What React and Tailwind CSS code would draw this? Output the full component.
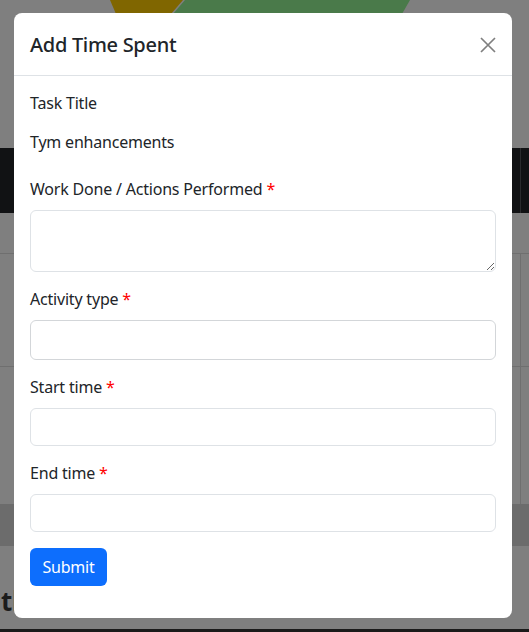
import React from "react";

const Field = ({ label, className = "mt-[15px]", children }) => (
  <div className={className}>
    <label className="block h-6 leading-6">
      {label} <span className="text-[#f00]">*</span>
    </label>
    <div className="mt-[9px]">{children}</div>
  </div>
);

const Backdrop = () => {
  return (
    <div className="flex flex-col h-[632px]">
      {/* logo strip */}
      <div className="h-[148px] shrink-0">
        <svg width="529" height="148" viewBox="0 0 529 148">
          <polygon points="110,0 183,0 171,14 116,14" fill="#806600" />
          <polygon points="185,0 410,0 402,14 173,14" fill="#4a7a4a" />
        </svg>
      </div>

      {/* navbar */}
      <div className="h-[65px] shrink-0 bg-[#111214] flex">
        <div className="w-[521px] border-r border-[#2a2b2d]" />
      </div>

      <div className="h-[41px] shrink-0 border-b border-[#6f6f6f]" />

      {/* table rows */}
      <div className="h-[113px] shrink-0 flex border-b border-[#6f6f6f]">
        <div className="w-[521px] border-r border-[#6f6f6f]" />
      </div>
      <div className="h-[137px] shrink-0 flex">
        <div className="w-[521px] border-r border-[#6f6f6f]" />
      </div>
      <div className="h-[42px] shrink-0 bg-[#6c6c6c]" />

      <div className="flex-1 flex items-center pl-[1px] pt-[26px]">
        <span className="text-[26px] font-bold text-[#1c1c1c] leading-none">th</span>
      </div>
      <div className="h-[3px] shrink-0 bg-[#1a1a1a]" />
    </div>
  );
};

export default function App() {
  return (
    <div className="relative w-[529px] h-[632px] overflow-hidden bg-[#7f7f7f] font-['Noto_Sans',sans-serif] text-[16px] text-[#212529]">
      <Backdrop />

      {/* modal */}
      <div className="absolute left-[14px] top-[13px] w-[498px] h-[605px] pt-[1px] bg-white rounded-lg flex flex-col tracking-[-0.2px]">
        <div className="h-[62px] shrink-0 flex items-center justify-between px-4 border-b border-[#dee2e6]">
          <h5 className="text-[20px] font-medium leading-[30px] tracking-[-0.3px]">Add Time Spent</h5>
          <button className="w-4 h-4 flex items-center justify-center">
            <svg width="16" height="16" viewBox="0 0 16 16">
              <path d="M1 1L15 15M15 1L1 15" stroke="#7f7f7f" strokeWidth="1.7" />
            </svg>
          </button>
        </div>

        <div className="px-4 pt-[15px]">
          <p className="h-6 leading-6">Task Title</p>
          <p className="h-6 leading-6 mt-[15px]">Tym enhancements</p>

          <Field label="Work Done / Actions Performed" className="mt-[23px]">
            <textarea className="block w-full h-[62px] border border-[#dee2e6] rounded-md" />
          </Field>
          <Field label="Activity type">
            <input className="block w-full h-[40px] border border-[#d3d6d9] rounded-md" />
          </Field>
          <Field label="Start time">
            <input className="block w-full h-[38px] border border-[#dee2e6] rounded-md" />
          </Field>
          <Field label="End time">
            <input className="block w-full h-[38px] border border-[#dee2e6] rounded-md" />
          </Field>

          <button className="mt-4 h-[38px] w-[77px] rounded-md bg-[#0d6efd] text-white">
            Submit
          </button>
        </div>
      </div>
    </div>
  );
}
